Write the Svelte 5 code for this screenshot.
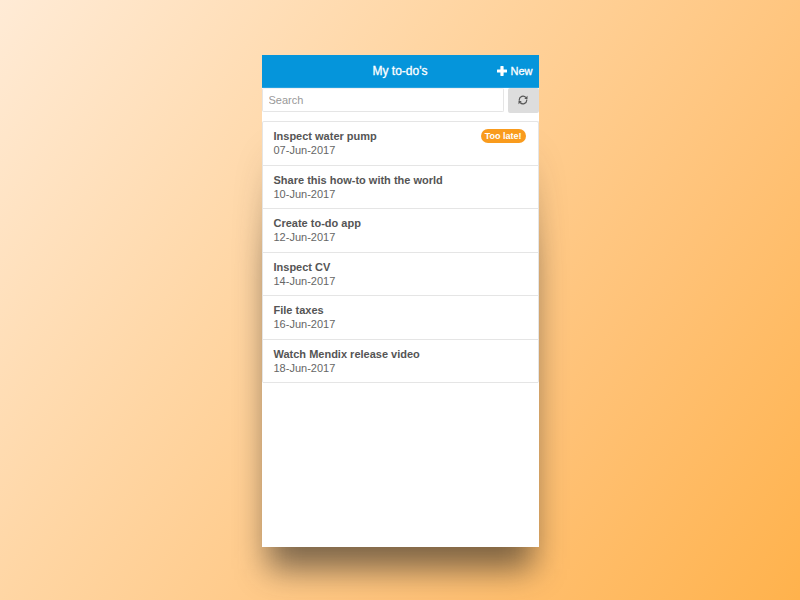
<script>
  const todos = [
    { title: 'Inspect water pump', due: '07-Jun-2017', late: true },
    { title: 'Share this how-to with the world', due: '10-Jun-2017' },
    { title: 'Create to-do app', due: '12-Jun-2017' },
    { title: 'Inspect CV', due: '14-Jun-2017' },
    { title: 'File taxes', due: '16-Jun-2017' },
    { title: 'Watch Mendix release video', due: '18-Jun-2017' }
  ];
</script>

<main class="stage">
  <section class="phone">
    <header class="bar">
      <h1>My to-do's</h1>
      <button class="new" type="button">
        <svg viewBox="0 0 10 10" width="10" height="10" aria-hidden="true">
          <path d="M3.4.4q0-.4.4-.4h2.400q.4 0 .4.4v3h3q.4 0 .4.4v2.400q0 .4-.4.4h-3v3q0 .4-.4.4H3.800q-.4 0-.4-.4v-3h-3q-.4 0-.4-.4V3.800q0-.4.4-.4h3z" fill="currentColor" />
        </svg>
        <span>New</span>
      </button>
    </header>

    <form class="search" onsubmit={(e) => e.preventDefault()}>
      <input type="text" placeholder="Search" aria-label="Search" />
      <button type="submit" aria-label="Refresh">
        <svg viewBox="0 0 16 16" width="10" height="10" aria-hidden="true">
          <path d="M2 9V7.500A6 5.800 0 0 1 12.600 4M14 7v1.500A6 5.800 0 0 1 3.400 12" fill="none" stroke="currentColor" stroke-width="1.900" />
          <path d="M15.200 1.200v5.200H10zM.8 14.800V9.600H6z" fill="currentColor" />
        </svg>
      </button>
    </form>

    <ul class="list">
      {#each todos as todo}
        <li>
          <div class="text">
            <strong>{todo.title}</strong>
            <span>{todo.due}</span>
          </div>
          {#if todo.late}
            <span class="badge">Too late!</span>
          {/if}
        </li>
      {/each}
    </ul>
  </section>
</main>

<style>
  :global(body) {
    margin: 0;
  }

  .stage {
    box-sizing: border-box;
    min-height: 100vh;
    padding-top: 2px;
    display: flex;
    align-items: center;
    justify-content: center;
    overflow: hidden;
    background: linear-gradient(127deg, #ffebd6 0%, #ffd6a4 36%, #ffc277 70%, #ffb24c 100%);
    font-family: 'Liberation Sans', Arial, sans-serif;
    font-size: 11px;
    line-height: 14px;
    color: #666;
  }

  .phone {
    position: relative;
    isolation: isolate;
    display: flex;
    flex-direction: column;
    width: 277px;
    max-width: 100%;
    min-height: 82vh;
  }

  .phone::before,
  .phone::after {
    content: '';
    position: absolute;
    inset: 0;
    z-index: -1;
    background: #fff;
  }

  .phone::before {
    inset: 90px 6px -22px;
    z-index: -2;
    background: linear-gradient(rgba(30, 30, 30, 0), rgba(30, 30, 30, 0.58) 120px);
    filter: blur(16px);
  }

  .bar {
    display: grid;
    grid-template-columns: 1fr auto 1fr;
    align-items: center;
    box-sizing: border-box;
    height: 33px;
    padding-right: 6px;
    background: #0595db;
    border-bottom: 1px solid #27a2e0;
    color: #fff;
  }

  h1 {
    grid-column: 2;
    margin: 0;
    padding-left: 6px;
    font-size: 12px;
    font-weight: 400;
    line-height: 14px;
    -webkit-text-stroke: 0.3px #fff;
  }

  button {
    display: flex;
    align-items: center;
    justify-content: center;
    border: 0;
    padding: 0;
    font: inherit;
    cursor: pointer;
  }

  .new {
    justify-self: end;
    gap: 3px;
    background: none;
    color: #fff;
    -webkit-text-stroke: 0.3px #fff;
  }

  .search {
    display: flex;
    align-items: flex-start;
    gap: 4px;
    margin-bottom: 8px;
  }

  input {
    flex: 1;
    min-width: 0;
    box-sizing: border-box;
    height: 24px;
    padding: 0 6px;
    border: 1px solid #e5e5e5;
    border-top-color: #f2f2f2;
    border-radius: 2px;
    background: #fff;
    color: #555;
    font: inherit;
  }

  input::placeholder {
    color: #999;
    opacity: 1;
  }

  .search button {
    width: 31px;
    height: 25px;
    padding-bottom: 2px;
    border-radius: 2px;
    background: #ddd;
    color: #555;
  }

  .list {
    display: flex;
    flex-direction: column;
    min-height: 262px;
    box-sizing: border-box;
    margin: 0;
    padding: 0;
    list-style: none;
    border: 1px solid #e5e5e5;
    border-bottom: 0;
    border-radius: 2px;
  }

  li {
    flex: 1;
    display: flex;
    align-items: flex-start;
    justify-content: space-between;
    padding: 7px 12px 7px 11px;
    border-bottom: 1px solid #e5e5e5;
  }

  .text {
    display: flex;
    flex-direction: column;
  }

  strong {
    color: #555;
  }

  .badge {
    padding: 0 4px;
    border-radius: 7px;
    background: #f99b1d;
    color: #fff;
    font-size: 9px;
    font-weight: 700;
  }
</style>
